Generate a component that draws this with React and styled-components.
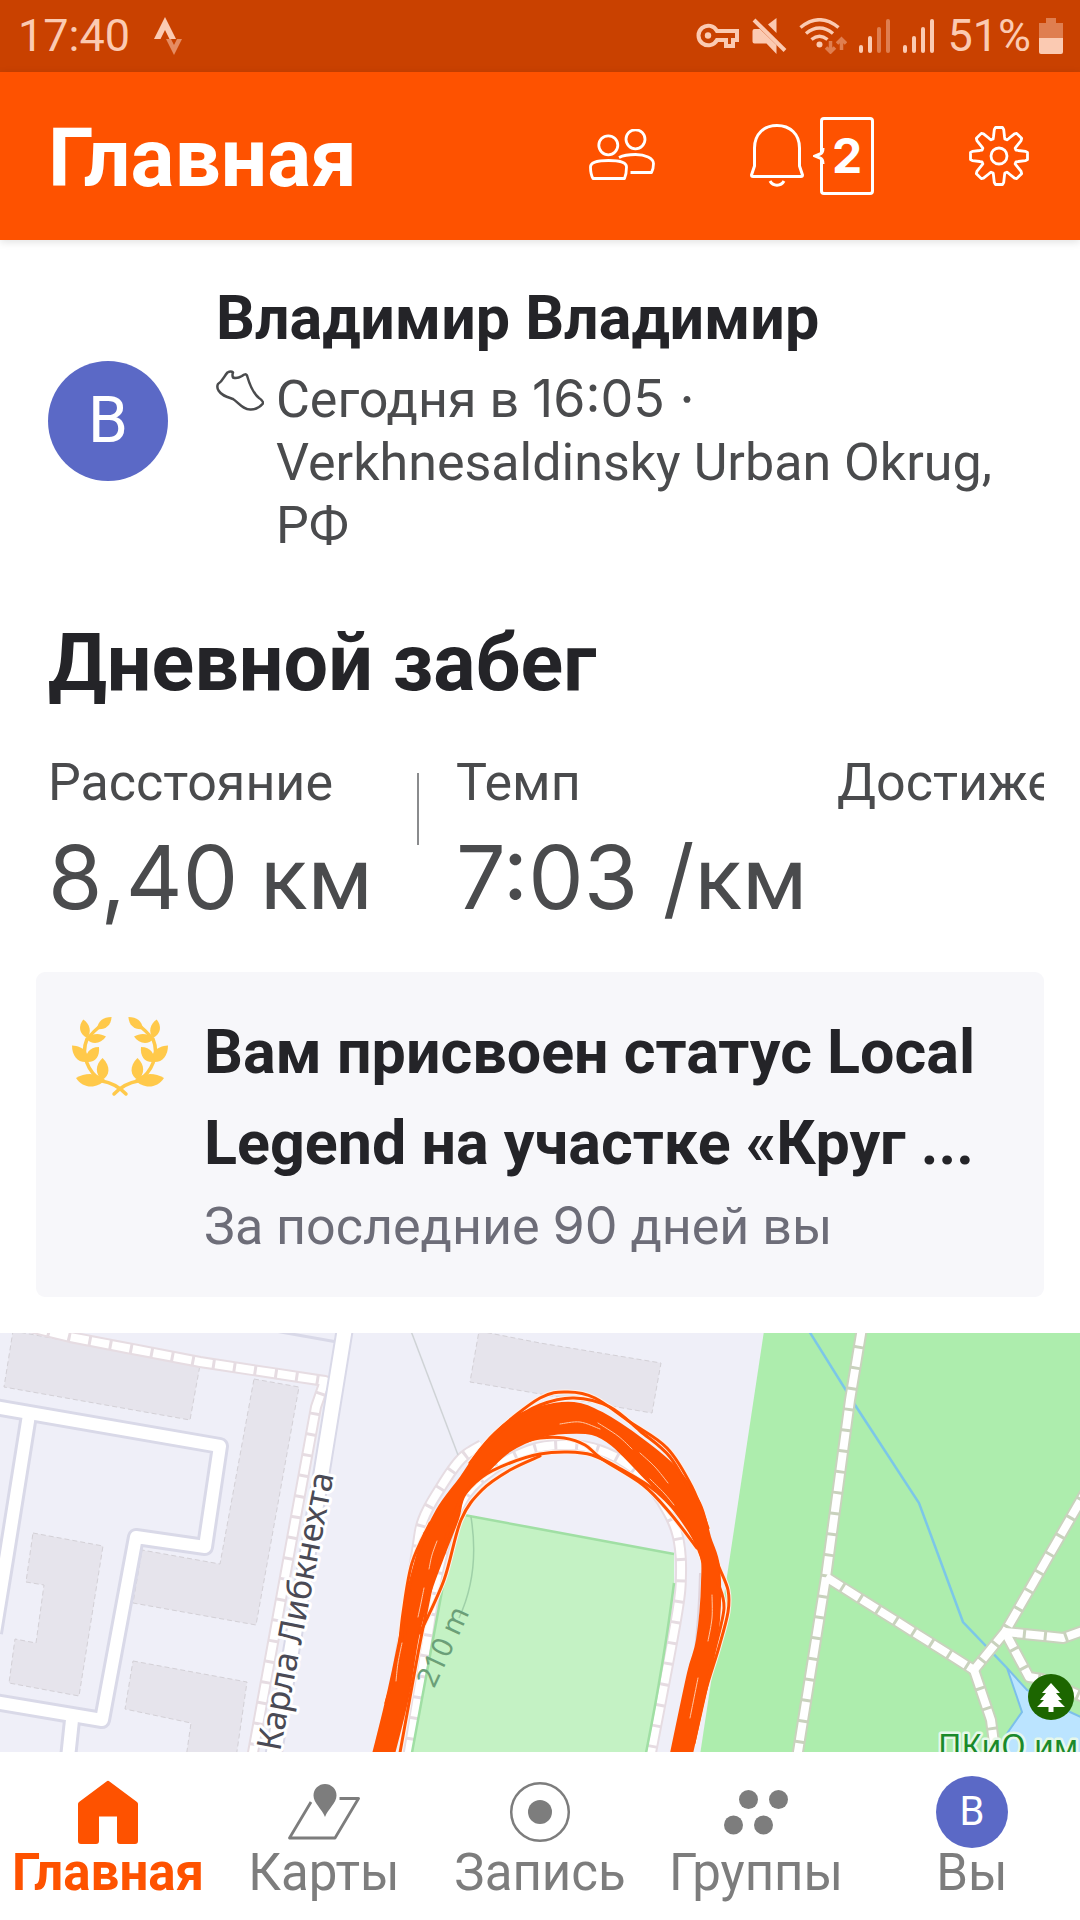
import React from "react"
import styled, { createGlobalStyle } from "styled-components"

const GlobalStyle = createGlobalStyle`
  * {
    box-sizing: border-box;
  }
  body {
    margin: 0;
    background-color: white;
    font-family: Roboto, "Liberation Sans", sans-serif;
  }
`

const Page = styled.div`
  min-height: 100vh;
  display: flex;
  flex-direction: column;
  color: #242428;
`

const Numeric = styled.span`
  font-family: Inter, Roboto, sans-serif;
  line-height: 1;
`

const StatusBar = styled.div`
  height: 72px;
  padding: 0 17px 0 18px;
  display: flex;
  align-items: center;
  justify-content: space-between;
  background-color: #c94100;
  color: #fbcab2;
  font-size: 45px;
  line-height: 72px;
`

const StatusGroup = styled.div`
  display: flex;
  align-items: center;
  gap: ${(props) => props.$gap}px;
`

const Header = styled.header`
  position: relative;
  height: 168px;
  padding: 0 51px 0 48px;
  display: flex;
  align-items: center;
  justify-content: space-between;
  background-color: #fe5200;
  color: white;
  box-shadow: 0 2px 8px rgba(0, 0, 0, 0.12);
`

const PageTitle = styled.h1`
  margin: 0;
  padding-top: 4px;
  font-size: 82px;
  line-height: 96px;
  font-weight: bold;
`

const HeaderActions = styled.div`
  display: flex;
  align-items: center;
  gap: 95px;
`

const IconButton = styled.button`
  display: flex;
  align-items: center;
  gap: 16px;
  padding: 0;
  border: 0;
  background: none;
  color: inherit;
  cursor: pointer;
`

const Badge = styled.span`
  position: relative;
  width: 54px;
  height: 78px;
  display: flex;
  align-items: center;
  justify-content: center;
  border: 3px solid white;
  border-radius: 4px;
  font: bold 48px/1 Inter, "Liberation Sans", sans-serif;
`

const BadgePointer = styled.svg`
  position: absolute;
  left: -10px;
  top: 28px;
`

const Feed = styled.main`
  flex: 1;
  display: flex;
  flex-direction: column;
`

const Athlete = styled.section`
  display: flex;
  align-items: center;
  gap: 48px;
  padding: 44px 48px 0;
`

const Avatar = styled.span`
  flex: none;
  width: ${(props) => props.$size}px;
  height: ${(props) => props.$size}px;
  display: flex;
  align-items: center;
  justify-content: center;
  border-radius: 50%;
  background-color: #5b69c6;
  color: white;
  font-size: ${(props) => (props.$size > 100 ? 64 : 40)}px;
`

const AthleteName = styled.h2`
  margin: 0 0 16px;
  font-size: 61px;
  line-height: 68px;
  font-weight: bold;
`

const Meta = styled.div`
  display: flex;
  align-items: flex-start;
  gap: 12px;
  color: #4a4b4d;
  font-size: 52px;
  line-height: 63px;

  svg {
    flex: none;
    margin-top: 2px;
  }
`

const ActivityTitle = styled.h2`
  margin: 62px 48px 46px;
  font-size: 79px;
  line-height: 88px;
  font-weight: bold;
`

const Stats = styled.dl`
  margin: 0 36px 43px 48px;
  display: flex;
  align-items: flex-start;
  overflow: hidden;
  white-space: nowrap;
  color: #4a4b4d;
`

const Stat = styled.div`
  flex: none;
  width: ${(props) => props.$width}px;
`

const Divider = styled.div`
  flex: none;
  width: 2px;
  height: 72px;
  margin: 20px 37px 0 0;
  background-color: #8a8b8d;
`

const StatLabel = styled.dt`
  font-size: 52px;
  line-height: 60px;
`

const StatValue = styled.dd`
  margin: 16px 0 0;
  font-size: 88px;
  line-height: 100px;
`

const Achievement = styled.section`
  margin: 0 36px 36px;
  padding: 35px 36px 40px;
  display: flex;
  align-items: flex-start;
  gap: 36px;
  border-radius: 9px;
  background-color: #f7f7fa;

  svg {
    flex: none;
    margin-top: 10px;
  }
`

const AchievementTitle = styled.h3`
  margin: 0 0 8px;
  font-size: 61px;
  line-height: 91px;
  font-weight: bold;
  white-space: nowrap;
`

const AchievementText = styled.p`
  margin: 0;
  color: #6d6d78;
  font-size: 52px;
  line-height: 60px;
`

const RouteMap = styled.svg`
  display: block;
  width: 100%;
  flex: 1 0 419px;
  font-family: "Noto Sans", "Open Sans", sans-serif;
`

const TabBar = styled.nav`
  padding: 24px 0 22px;
  display: grid;
  grid-template-columns: repeat(5, 1fr);
  background-color: white;
`

const Tab = styled.a`
  display: flex;
  flex-direction: column;
  align-items: center;
  color: ${(props) => (props.$active ? "#fe5200" : "#7d7d7d")};
  font-size: 51px;
  line-height: 50px;
  font-weight: ${(props) => (props.$active ? "bold" : "normal")};
  text-decoration: none;
`

const TabIcon = styled.span`
  height: 72px;
  display: flex;
  align-items: center;
`

// rounded curve that passes through all the points
const smooth = (points) =>
  points.reduce((d, p, i) => {
    if (i === 0) return `M${p[0]} ${p[1]}`
    const a = points[i - 2] || points[i - 1]
    const b = points[i - 1]
    const c = points[i + 1] || p
    return `${d}C${b[0] + (p[0] - a[0]) / 6} ${b[1] + (p[1] - a[1]) / 6} ${
      p[0] - (c[0] - b[0]) / 6
    } ${p[1] - (c[1] - b[1]) / 6} ${p[0]} ${p[1]}`
  }, "")

const polar = (r, deg) => {
  const a = (deg * Math.PI) / 180
  return `${30 + r * Math.sin(a)} ${30 - r * Math.cos(a)}`
}

const gearPath =
  "M" +
  [0, 45, 90, 135, 180, 225, 270, 315]
    .map((deg) =>
      [
        polar(18, deg - 19),
        polar(20, deg - 16),
        polar(27, deg - 10),
        polar(28.7, deg - 7),
        polar(28.7, deg + 7),
        polar(27, deg + 10),
        polar(20, deg + 16),
        polar(18, deg + 19),
      ].join("L")
    )
    .join("L") +
  "Z"

const StravaIcon = () => (
  <svg width="28" height="38" viewBox="0 0 28 38" fill="currentColor">
    <path d="M11 0L0 22h6.500L11 13l4.500 9H22z" />
    <path d="M12 22h5l3 6 3-6h5l-8 16z" opacity="0.55" />
  </svg>
)

const KeyIcon = () => (
  <svg width="44" height="26" viewBox="0 0 44 26" fill="none" stroke="currentColor" strokeWidth="4">
    <path d="M21 8H41V17H37V23H30V17H21A9.800 9.800 0 1 1 21 8Z" />
    <circle cx="12" cy="12.500" r="3.200" fill="currentColor" stroke="none" />
  </svg>
)

const MuteIcon = () => (
  <svg width="35" height="36" viewBox="0 0 35 36" fill="currentColor">
    <path d="M24.500 0V15L16 6.500z" />
    <path d="M2.500 11H8L24.500 27V36L14.500 25.500H2.500Q.5 25.500 .5 23.500V13Q.5 11 2.500 11z" />
    <path d="M2 2L33 32.500" stroke="currentColor" strokeWidth="4" />
  </svg>
)

const WifiIcon = () => (
  <svg width="48" height="36" viewBox="0 0 48 36" fill="none" stroke="currentColor" strokeWidth="3.500">
    <path d="M1.500 9.500Q20.500 -6 39.500 9.500M7 15.500Q20.500 4.500 34 15.500M12.500 21.500Q20.500 15 28.500 21.500" />
    <circle cx="20.500" cy="26.500" r="3" fill="currentColor" stroke="none" />
    <path d="M31.500 23V34M27 29.500L31.500 34L36 29.500M42.500 32V21M38 25.500L42.500 21L47 25.500" opacity="0.45" />
  </svg>
)

const SignalIcon = ({ level }) => (
  <svg width="32" height="34" viewBox="0 0 32 34" fill="currentColor">
    {[26, 17, 8, 0].map((top, i) => (
      <rect key={top} x={i * 9} y={top} width="4" height={34 - top} rx="2" opacity={i < level ? 1 : 0.45} />
    ))}
  </svg>
)

const BatteryIcon = () => (
  <svg width="24" height="36" viewBox="0 0 24 36" fill="currentColor">
    <path d="M7 0H17V5H24V20H0V5H7z" opacity="0.45" />
    <path d="M0 20H24V34Q24 36 22 36H2Q0 36 0 34z" />
  </svg>
)

const FriendsIcon = () => (
  <svg width="66" height="54" viewBox="0 0 66 54" fill="none" stroke="currentColor" strokeWidth="2.800" strokeLinejoin="round">
    <circle cx="19.300" cy="16.300" r="9.500" />
    <circle cx="46.500" cy="10.300" r="9.500" />
    <path d="M1.500 38C1.500 33 10 31.500 19.500 31.500S37.500 33 37.500 38C37.500 42 37 46 35.500 49.500H4C2 46 1.500 42 1.500 38z" />
    <path d="M30 28.500C35 26 41 25.500 46.500 25.500C56 25.500 64.500 29 64.500 34.500C64.500 38 64 41 62.500 43.500H41.500" />
  </svg>
)

const BellIcon = () => (
  <svg width="54" height="64" viewBox="0 0 54 64" fill="none" stroke="currentColor" strokeWidth="3" strokeLinejoin="round">
    <path d="M4.500 24C4.500 10 14 1.500 27 1.500S49.500 10 49.500 24V42L52.500 51Q52.500 52.500 51 52.500H3Q1.500 52.500 1.500 51L4.500 42z" />
    <path d="M20 57C23 62.500 31 62.500 34 57" />
  </svg>
)

const GearIcon = () => (
  <svg width="60" height="60" viewBox="0 0 60 60" fill="none" stroke="currentColor" strokeWidth="2.800" strokeLinejoin="round">
    <path d={gearPath} />
    <circle cx="30" cy="30" r="8" />
  </svg>
)

const ShoeIcon = () => (
  <svg width="48" height="42" viewBox="0 0 48 42" fill="none" stroke="currentColor" strokeWidth="2.500" strokeLinejoin="round">
    <path d="M2 14Q.5 17 2.500 20.500C6 26 11 27 17 29C23 33 27 40 35 39.500C40 39.500 44 37 47 33.500Q47.500 31 43 28C38 24 34 16 31 5.500Q29.500 3 26 6Q21 9 17 7.500Q16 5 17 2.500Q15 .5 11.500 2.500C8 6 7 11 2 14z" />
  </svg>
)

const LaurelBranch = () => (
  <>
    <path d="M17 20Q22 14 27 10M15 22Q10 34 15 46Q19 57 30 64Q43 66 54 77" fill="none" stroke="#ffc94a" strokeWidth="3.500" strokeLinecap="round" />
    <path d="M39.600 0C31 0 26 4 25 12C33 13 39 9 39.600 0z" />
    <path d="M11.300 2.500C6 9 7 17 15 21C20 15 18 7 11.300 2.500z" />
    <path d="M34 19.500C27 15.500 20 16 14.500 22C20 28 29 27 34 19.500z" />
    <path d="M0 28.500C0 39 6 46 15 45C18 37 12 29 0 28.500z" />
    <path d="M27 30C17 30 13 37 14 45C23 46 28 40 27 30z" />
    <path d="M30.500 41C23 48 23 57 30 63C38 59 39 49 30.500 41z" />
    <path d="M4 61C14 55 26 56 33 63C25 72 11 72 4 61z" />
  </>
)

const LaurelIcon = () => (
  <svg width="96" height="80" viewBox="0 0 96 80" fill="#ffc94a">
    <LaurelBranch />
    <g transform="translate(96 0) scale(-1 1)">
      <LaurelBranch />
    </g>
  </svg>
)

const HomeIcon = () => (
  <svg width="60" height="64" viewBox="0 0 60 64" fill="currentColor">
    <path d="M28.500 1.500Q30 0 31.500 1.500L59 22Q60 23 60 24V61Q60 64 57 64H42Q39 64 39 61V36.500H21V61Q21 64 18 64H3Q0 64 0 61V24Q0 23 1 22z" />
  </svg>
)

const MapsIcon = () => (
  <svg width="72" height="56" viewBox="0 0 72 56" fill="none" stroke="currentColor" strokeWidth="2.800" strokeLinejoin="round">
    <path d="M23 18L1.500 54H47L70.500 14.500H51.500" />
    <path d="M37 33C34 25 25.500 19 25.500 11.500A11.500 11.500 0 0 1 48.500 11.500C48.500 19 40 25 37 33z" fill="currentColor" stroke="none" />
  </svg>
)

const RecordIcon = () => (
  <svg width="62" height="62" viewBox="0 0 62 62">
    <circle cx="31" cy="31" r="28.800" fill="none" stroke="currentColor" strokeWidth="2.500" />
    <circle cx="31" cy="31" r="12" fill="currentColor" />
  </svg>
)

const GroupsIcon = () => (
  <svg width="64" height="46" viewBox="0 0 64 46" fill="currentColor">
    <circle cx="24.500" cy="10.500" r="9.500" />
    <circle cx="54.500" cy="10.500" r="9.500" />
    <circle cx="9.500" cy="36" r="9.500" />
    <circle cx="39.500" cy="36" r="9.500" />
  </svg>
)

const buildings = [
  "13,-2 200,32 190,87 4,54",
  "254,46 299,54 256,292 133,270 142,217 220,231",
  "33,200 103,213 79,363 9,350 15,306 36,310 44,252 26,249",
  "133,328 247,349 236,425 186,425 191,390 125,376",
  "479,-2 540,10 661,30 652,80 470,49",
]

const roads = [
  "M-5 74L220 113L205 214L136 204L102 387L-5 369",
  "M29 82L7 220L-6 300",
  "M72 387L68 425",
]

const townPaths = [
  "M30 -6L70 4L200 29L325 48L316 74L252 425",
  smooth([[482, 112], [461, 126], [441, 154], [423, 187], [416, 224], [396, 350], [380, 425]]),
  smooth([[408, 425], [425, 320], [440, 230], [462, 168], [492, 137], [530, 117], [561, 112], [592, 115], [621, 127], [645, 146], [667, 177], [678, 204], [681, 240], [676, 287], [650, 425]]),
]

const parkPaths = [
  "M862 -5L850 67L826 244L797 425",
  "M826 244L974 337L1005 299L1085 160",
  "M1005 299L1063 305L1088 296",
  "M1005 299L1029 344L1042 346L1090 367",
  "M974 337L991 387L994 410",
]

const band = [
  [372, 425], [384, 377], [393, 337], [406, 274], [418, 220], [437, 177], [461, 144], [482, 114],
  [510, 87], [540, 74], [574, 70], [602, 80], [643, 107], [676, 135], [700, 170], [710, 204],
  [719, 234], [719, 287], [710, 340], [691, 425],
]

const bandInner = [
  [670, 425], [688, 340], [697, 307], [702, 250], [699, 217], [674, 177], [640, 140], [612, 112],
  [592, 101], [565, 100], [540, 104], [510, 118], [488, 138], [465, 162], [458, 186], [446, 217],
  [430, 260], [418, 304], [408, 364], [393, 425],
]

const laps = [
  [[470, 130], [495, 100], [540, 65], [568, 59], [595, 65], [630, 89], [667, 115], [692, 154], [708, 195]],
  [[482, 116], [510, 90], [540, 72], [574, 65], [610, 74], [640, 98], [670, 124], [694, 165]],
  [[446, 205], [461, 166], [482, 144], [510, 130], [540, 121], [568, 119], [592, 122], [619, 135], [657, 159], [688, 194], [703, 228]],
  [[420, 300], [444, 247], [461, 187], [482, 157], [510, 137], [540, 123]],
  [[520, 110], [540, 105], [564, 105], [585, 112], [602, 126], [643, 152], [670, 180], [697, 215]],
  [[430, 190], [412, 230], [403, 280], [397, 330], [386, 370]],
  [[425, 200], [408, 260], [404, 320], [393, 350]],
  [[712, 215], [719, 234], [728, 257], [728, 279], [719, 314], [705, 360], [694, 410]],
  [[718, 250], [724, 275], [714, 320], [702, 370]],
  [[436, 230], [420, 310], [409, 370], [399, 425]],
]

const gaps = [
  [[640, 120], [655, 134], [668, 150]],
  [[650, 146], [664, 160], [674, 172]],
  [[560, 91], [580, 89], [600, 96]],
  [[598, 90], [618, 103], [632, 116]],
  [[437, 208], [432, 222], [429, 236]],
  [[424, 255], [421, 270], [418, 284]],
  [[712, 262], [712, 285], [708, 308]],
  [[698, 345], [693, 370], [690, 385]],
  [[402, 310], [398, 330], [396, 348]],
]

const Footpaths = ({ paths, edge }) => (
  <g fill="none" strokeLinejoin="round">
    {paths.map((d) => (
      <path key={d} d={d} stroke={edge} strokeWidth="12" />
    ))}
    {paths.map((d) => (
      <path key={d} d={d} stroke="white" strokeWidth="8" strokeDasharray="18 3" />
    ))}
  </g>
)

const ActivityMap = () => (
  <RouteMap viewBox="0 0 1080 419" preserveAspectRatio="xMidYMid slice" role="img" aria-label="Карта маршрута">
    <rect width="1080" height="419" fill="#efeff8" />
    <path d="M764 -2H1082V422H700z" fill="#adedad" />
    <g fill="#e6e4ec" stroke="#d3d0d6" strokeDasharray="5 3">
      {buildings.map((points) => (
        <polygon key={points} points={points} />
      ))}
    </g>

    <g fill="none" strokeLinejoin="round">
      <path d="M275 -2L337 9" stroke="#d9d9e8" strokeWidth="3" />
      {roads.map((d) => (
        <path key={d} d={d} stroke="#d9d9e8" strokeWidth="18" />
      ))}
      {roads.map((d) => (
        <path key={d} d={d} stroke="white" strokeWidth="12" />
      ))}
    </g>
    <Footpaths paths={townPaths} edge="#e6dce2" />
    <path d="M345 -5L322 137L273 425" stroke="#d9d9e8" strokeWidth="18" fill="none" />
    <path d="M345 -5L322 137L273 425" stroke="white" strokeWidth="14" fill="none" />

    <path d="M464 182L674 221L674 250Q664 330 645 425H411L444 247z" fill="#c4f2c4" />
    <path d="M464 182L674 221M674 250Q664 330 645 425M444 247L411 425" stroke="#a0dfa4" strokeWidth="2.500" fill="none" />
    <path d="M411 -2L458 122" stroke="#cfd3d6" strokeWidth="1.500" />
    <path d="M471 184Q480 240 459 285" stroke="#9fd0a8" strokeWidth="1.500" fill="none" />
    <path d="M700 240Q698 330 678 425" stroke="#e0d4dc" strokeWidth="2" fill="none" />

    <path d="M809 -2L857 75L919 170L963 289L1007 335" stroke="#7cc7e8" strokeWidth="2.500" fill="none" />
    <path d="M1007 335L1027 357L1070 379L1085 386V425H995L1008 399L1022 379z" fill="#bbe4ff" stroke="#7cbfea" strokeWidth="2" />
    <Footpaths paths={parkPaths} edge="#c9d2bd" />

    <g fill="none" strokeLinecap="round">
      {laps.map((points, i) => (
        <path key={i} d={smooth(points)} stroke="#fff1e8" strokeWidth="5" />
      ))}
      <path d={smooth(band) + smooth(bandInner).replace("M", "L") + "Z"} fill="#fe5200" stroke="#fe5200" strokeWidth="2" />
      {laps.map((points, i) => (
        <path key={i} d={smooth(points)} stroke="#fe5200" strokeWidth="3" />
      ))}
      {gaps.map((points, i) => (
        <path key={i} d={smooth(points)} stroke="#ffc6a3" strokeWidth="1" />
      ))}
    </g>

    <text transform="translate(280 419) rotate(-79)" fontSize="34" fill="#4a4a55" stroke="white" strokeWidth="6" strokeLinejoin="round" paintOrder="stroke">
      Карла Либкнехта
    </text>
    <text transform="translate(434 356) rotate(-65)" fontSize="29" fill="#6b9f78">
      210 m
    </text>

    <circle cx="1051" cy="364" r="23" fill="#1c6600" />
    <path d="M1051 350L1060 360H1056L1062 367H1058L1065 374H1053.500V379H1048.500V374H1037L1044 367H1040L1046 360H1042z" fill="white" />
    <text x="938" y="425" fontSize="32" fill="#1b8a2a" stroke="#e6f8ea" strokeWidth="5" strokeLinejoin="round" paintOrder="stroke">
      ПКиО им
    </text>
  </RouteMap>
)

const tabs = [
  { href: "#home", label: "Главная", icon: <HomeIcon />, active: true },
  { href: "#maps", label: "Карты", icon: <MapsIcon /> },
  { href: "#record", label: "Запись", icon: <RecordIcon /> },
  { href: "#groups", label: "Группы", icon: <GroupsIcon /> },
  { href: "#you", label: "Вы", icon: <Avatar $size={72}>В</Avatar> },
]

const App = () => {
  return (
    <Page>
      <GlobalStyle />
      <StatusBar>
        <StatusGroup $gap={24}>
          <span>17:40</span>
          <StravaIcon />
        </StatusGroup>
        <StatusGroup $gap={12}>
          <KeyIcon />
          <MuteIcon />
          <WifiIcon />
          <SignalIcon level={2} />
          <SignalIcon level={4} />
          <StatusGroup $gap={8}>
            <span>51%</span>
            <BatteryIcon />
          </StatusGroup>
        </StatusGroup>
      </StatusBar>

      <Header>
        <PageTitle>Главная</PageTitle>
        <HeaderActions>
          <IconButton aria-label="Друзья">
            <FriendsIcon />
          </IconButton>
          <IconButton aria-label="Уведомления">
            <BellIcon />
            <Badge>
              <BadgePointer width="12" height="16" viewBox="0 0 12 16">
                <path d="M12 0V16L9 12Q8 11 2 8Q8 5 9 4z" fill="#fe5200" />
                <path d="M10 0Q10 5 7 6L2 8L7 10Q10 11 10 16" fill="none" stroke="white" strokeWidth="3" />
              </BadgePointer>
              2
            </Badge>
          </IconButton>
          <IconButton aria-label="Настройки">
            <GearIcon />
          </IconButton>
        </HeaderActions>
      </Header>

      <Feed>
        <Athlete>
          <Avatar $size={120}>В</Avatar>
          <div>
            <AthleteName>Владимир Владимир</AthleteName>
            <Meta>
              <ShoeIcon />
              <div>
                Сегодня в <Numeric>16:05 ·</Numeric>
                <br />
                Verkhnesaldinsky Urban Okrug, РФ
              </div>
            </Meta>
          </div>
        </Athlete>

        <ActivityTitle>Дневной забег</ActivityTitle>

        <Stats>
          <Stat $width={369}>
            <StatLabel>Расстояние</StatLabel>
            <StatValue>
              <Numeric>8,40</Numeric> км
            </StatValue>
          </Stat>
          <Divider />
          <Stat $width={381}>
            <StatLabel>Темп</StatLabel>
            <StatValue>
              <Numeric>7:03 /</Numeric>км
            </StatValue>
          </Stat>
          <Stat>
            <StatLabel>Достижения</StatLabel>
          </Stat>
        </Stats>

        <Achievement>
          <LaurelIcon />
          <div>
            <AchievementTitle>
              Вам присвоен статус Local
              <br />
              Legend на участке «Круг ...
            </AchievementTitle>
            <AchievementText>
              За последние <Numeric>90</Numeric> дней вы
            </AchievementText>
          </div>
        </Achievement>

        <ActivityMap />
      </Feed>

      <TabBar>
        {tabs.map((tab) => (
          <Tab key={tab.href} href={tab.href} $active={tab.active}>
            <TabIcon>{tab.icon}</TabIcon>
            {tab.label}
          </Tab>
        ))}
      </TabBar>
    </Page>
  )
}

export default App
